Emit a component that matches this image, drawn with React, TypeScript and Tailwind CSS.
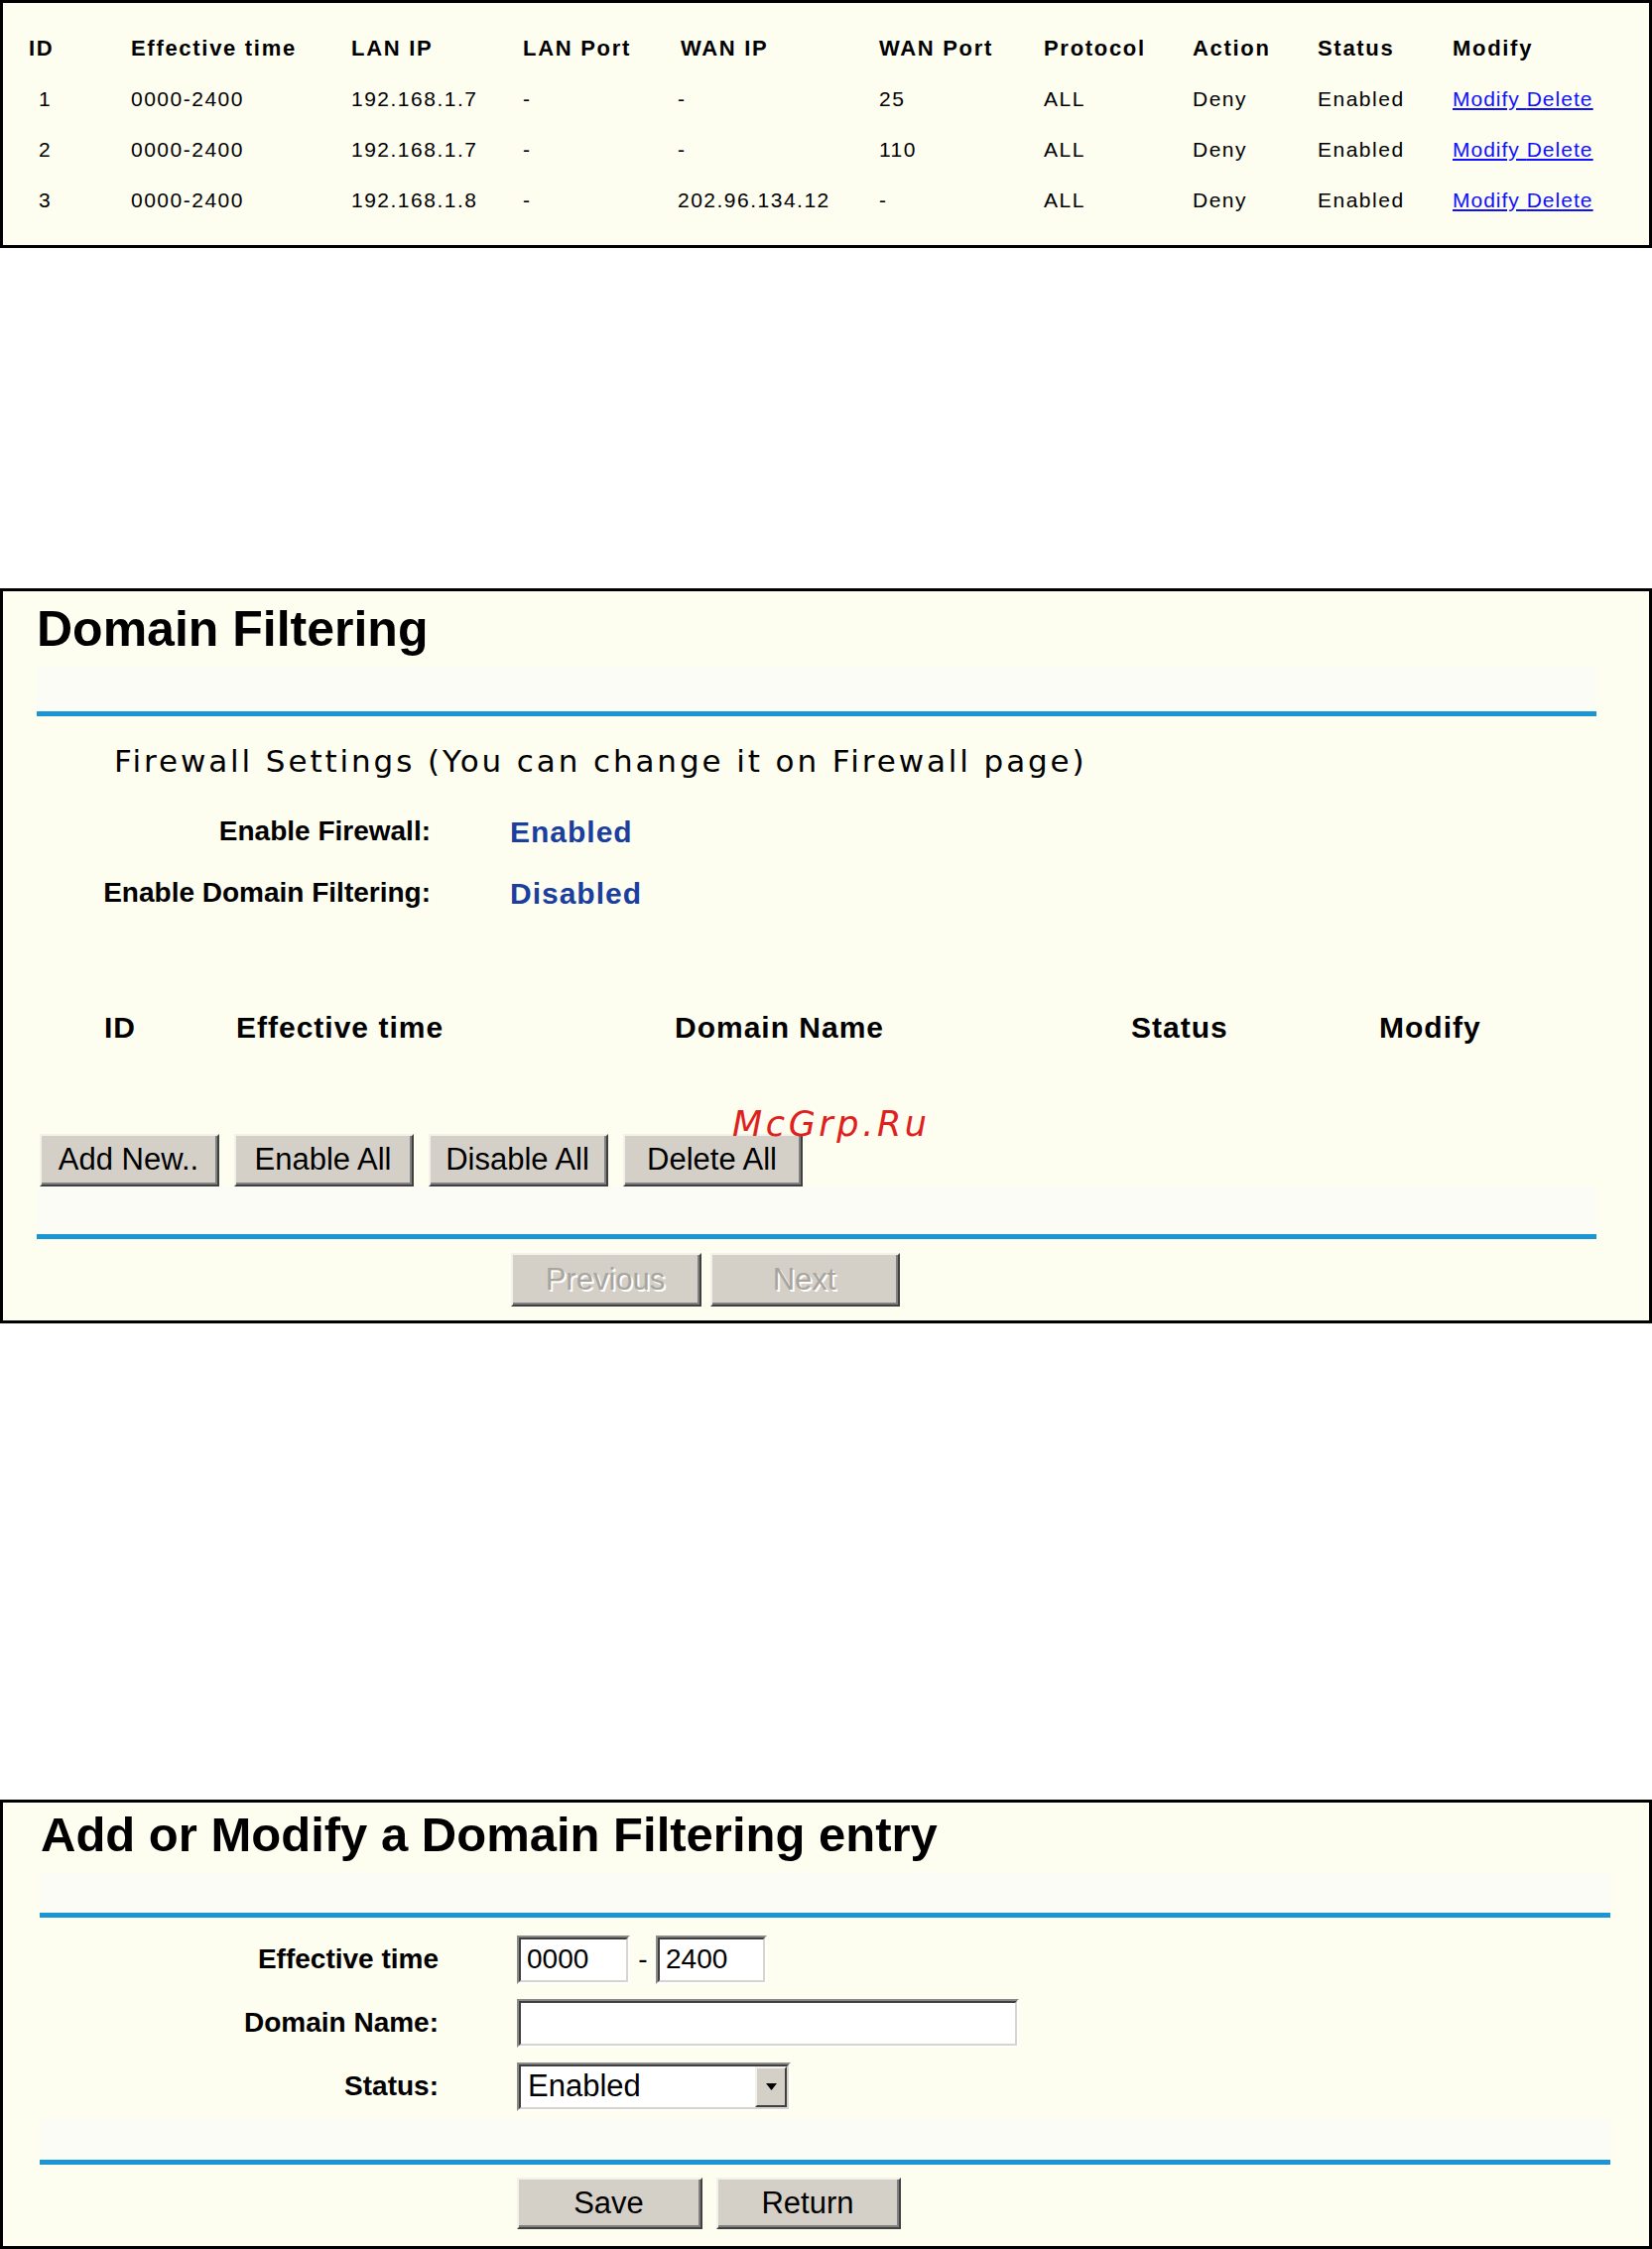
import React from 'react';

const headers = ['ID', 'Effective time', 'LAN IP', 'LAN Port', 'WAN IP', 'WAN Port', 'Protocol', 'Action', 'Status', 'Modify'];

const rules = [
  ['1', '0000-2400', '192.168.1.7', '-', '-', '25', 'ALL', 'Deny', 'Enabled'],
  ['2', '0000-2400', '192.168.1.7', '-', '-', '110', 'ALL', 'Deny', 'Enabled'],
  ['3', '0000-2400', '192.168.1.8', '-', '202.96.134.12', '-', 'ALL', 'Deny', 'Enabled'],
];

const cols = 'grid grid-cols-[103px_222px_173px_159px_200px_166px_150px_126px_136px_1fr] h-[51px] items-center';

function RaisedButton({ label, width, height, disabled }: { label: string; width: string; height: string; disabled?: boolean }) {
  return (
    <button
      type="button"
      className={`${width} ${height} bg-[#d4d0c8] border-2 border-t-[#f2f1ec] border-l-[#f2f1ec] border-r-[#404040] border-b-[#404040]`}
    >
      <div
        className={`w-full h-full flex items-center justify-center border-r-2 border-b-2 border-r-[#808080] border-b-[#808080] text-[31px] leading-none ${
          disabled ? 'text-[#a9a59d] [text-shadow:2px_2px_0_#ffffff]' : 'text-black'
        }`}
      >
        {label}
      </div>
    </button>
  );
}

function InsetBox({ className, children }: { className: string; children?: React.ReactNode }) {
  return (
    <div className={`${className} border-2 border-t-[#8a8a8a] border-l-[#8a8a8a] border-r-white border-b-white`}>
      <div className="w-full h-full bg-white border-2 border-t-[#3f3f3f] border-l-[#3f3f3f] border-r-[#d8d5cd] border-b-[#d8d5cd] flex items-center">
        {children}
      </div>
    </div>
  );
}

function FirewallRules() {
  return (
    <section className="w-full h-[250px] border-[3px] border-black bg-[#fdfdf0] pt-[20px] pl-[26px]">
      <div className={`${cols} text-[22px] font-bold tracking-[1.7px]`}>
        {headers.map((h) => (
          <div key={h}>{h}</div>
        ))}
      </div>
      {rules.map((r) => (
        <div key={r[0]} className={`${cols} text-[21px] tracking-[1.5px]`}>
          {r.map((c, i) => (
            <div key={i} className={i === 0 ? 'pl-[10px]' : i === 4 ? '-ml-[3px]' : ''}>
              {c}
            </div>
          ))}
          <div className="text-[#1010ff] underline tracking-[1px]">
            <a href="#">Modify</a> <a href="#">Delete</a>
          </div>
        </div>
      ))}
    </section>
  );
}

function DomainFiltering() {
  return (
    <section className="relative w-full h-[741px] mt-[343px] border-[3px] border-black bg-[#fdfdf0]">
      <div className="ml-[34px] w-[1572px] flex flex-col">
        <div className="h-[76px] pt-[13px]">
          <h1 className="text-[50px] leading-[50px] font-bold">Domain Filtering</h1>
        </div>
        <div className="h-[45px] bg-[#fbfcf5]" />
        <div className="h-[5px] bg-[#1a96d4]" />

        <div className="mt-[25px] h-[40px] pl-[78px] text-[31px] leading-[40px] tracking-[2.9px] [font-family:'DejaVu_Sans',sans-serif]">
          Firewall Settings (You can change it on Firewall page)
        </div>

        <div className="mt-[20px] flex flex-col">
          {[
            ['Enable Firewall:', 'Enabled'],
            ['Enable Domain Filtering:', 'Disabled'],
          ].map(([k, v]) => (
            <div key={k} className="h-[62px] flex items-center">
              <div className="w-[397px] text-right text-[28px] font-bold">{k}</div>
              <div className="ml-[80px] text-[30px] font-bold tracking-[1px] text-[#1b3f9e]">{v}</div>
            </div>
          ))}
        </div>

        <div className="mt-[84px] h-[40px] flex items-center pl-[68px] text-[30px] font-bold tracking-[1px]">
          <div className="w-[133px]">ID</div>
          <div className="w-[442px]">Effective time</div>
          <div className="w-[460px]">Domain Name</div>
          <div className="w-[250px]">Status</div>
          <div>Modify</div>
        </div>

        <div className="mt-[88px] h-[53px] pl-[3px] flex gap-[15px]">
          <RaisedButton label="Add New.." width="w-[181px]" height="h-[53px]" />
          <RaisedButton label="Enable All" width="w-[181px]" height="h-[53px]" />
          <RaisedButton label="Disable All" width="w-[181px]" height="h-[53px]" />
          <RaisedButton label="Delete All" width="w-[181px]" height="h-[53px]" />
        </div>
        <div className="h-[48px] bg-[#fbfcf5]" />
        <div className="h-[5px] bg-[#1a96d4]" />

        <div className="mt-[14px] h-[54px] pl-[478px] flex gap-[9px]">
          <RaisedButton label="Previous" width="w-[192px]" height="h-[54px]" disabled />
          <RaisedButton label="Next" width="w-[191px]" height="h-[54px]" disabled />
        </div>
      </div>

      {/* watermark */}
      <div className="absolute left-[735px] top-[520px] text-[35px] leading-[35px] italic tracking-[3.6px] text-[#e0201c] [font-family:'DejaVu_Sans',sans-serif]">
        McGrp.Ru
      </div>
    </section>
  );
}

function AddEntry() {
  return (
    <section className="w-full h-[453px] mt-[480px] border-[3px] border-black bg-[#fdfdf0]">
      <div className="ml-[37px] w-[1583px] flex flex-col">
        <div className="h-[70px] pt-[7px] pl-[1px]">
          <h1 className="text-[49px] leading-[50px] font-bold">Add or Modify a Domain Filtering entry</h1>
        </div>
        <div className="h-[41px] bg-[#fbfcf5]" />
        <div className="h-[5px] bg-[#1a96d4]" />

        <div className="mt-[10px] flex flex-col">
          <div className="h-[64px] flex items-center">
            <div className="w-[402px] text-right text-[28px] font-bold">Effective time</div>
            <div className="ml-[79px] flex items-center">
              <InsetBox className="w-[114px] h-[49px]">
                <input readOnly defaultValue="0000" className="w-full h-full px-[6px] text-[28px] bg-white outline-none" />
              </InsetBox>
              <div className="w-[26px] text-center text-[28px]">-</div>
              <InsetBox className="w-[112px] h-[49px]">
                <input readOnly defaultValue="2400" className="w-full h-full px-[6px] text-[28px] bg-white outline-none" />
              </InsetBox>
            </div>
          </div>
          <div className="h-[64px] flex items-center">
            <div className="w-[402px] text-right text-[28px] font-bold">Domain Name:</div>
            <div className="ml-[79px]">
              <InsetBox className="w-[506px] h-[49px]">
                <input readOnly defaultValue="" className="w-full h-full px-[6px] text-[28px] bg-white outline-none" />
              </InsetBox>
            </div>
          </div>
          <div className="h-[64px] flex items-center">
            <div className="w-[402px] text-right text-[28px] font-bold">Status:</div>
            <div className="ml-[79px]">
              <InsetBox className="w-[276px] h-[49px]">
                <div className="flex-1 pl-[7px] text-[31px]">Enabled</div>
                <div className="w-[32px] h-full bg-[#d4d0c8] border-2 border-t-[#f2f1ec] border-l-[#f2f1ec] border-r-[#404040] border-b-[#404040] flex items-center justify-center">
                  <svg width="11" height="7" viewBox="0 0 11 7">
                    <path d="M0 0h11L5.5 7z" fill="#000" />
                  </svg>
                </div>
              </InsetBox>
            </div>
          </div>
        </div>

        <div className="h-[42px] bg-[#fbfcf5]" />
        <div className="h-[5px] bg-[#1a96d4]" />

        <div className="mt-[13px] h-[52px] pl-[481px] flex gap-[14px]">
          <RaisedButton label="Save" width="w-[187px]" height="h-[52px]" />
          <RaisedButton label="Return" width="w-[186px]" height="h-[52px]" />
        </div>
      </div>
    </section>
  );
}

export default function App() {
  return (
    <div className="w-[1665px] min-h-[2267px] bg-white text-black [font-family:'Liberation_Sans',Arial,sans-serif]">
      <FirewallRules />
      <DomainFiltering />
      <AddEntry />
    </div>
  );
}
